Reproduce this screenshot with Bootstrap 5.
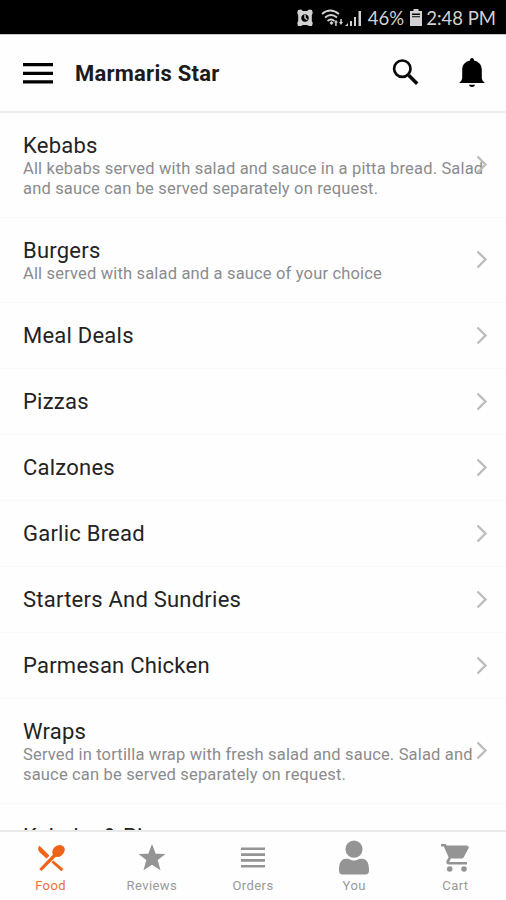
<!DOCTYPE html>
<html lang="en">
<head>
<meta charset="utf-8">
<meta name="viewport" content="width=device-width, initial-scale=1">
<title>Marmaris Star</title>
<link href="https://cdn.jsdelivr.net/npm/bootstrap@5.3.0/dist/css/bootstrap.min.css" rel="stylesheet">
<style>
body{font-family:Roboto,"Liberation Sans",sans-serif;background:#fefefe;color:#222}
.status-bar{height:34px;background:#000;color:#d2d2d2;font:400 18.5px Lato,sans-serif;padding:2px 10px 0 0}
.status-bar svg{fill:#d2d2d2}
.pct{margin-left:6px}
.batt{margin-left:6px}
.wifi{margin-left:7px}
.top-bar{height:79px;padding:0 20px 0 23px;border-top:1px solid #c9c9c9;border-bottom:2px solid #ebebeb;background:#fefefe}
.shop-name{font-size:22px;font-weight:700;line-height:26px;letter-spacing:.24px;margin-left:22px;padding-top:2px;color:#1b1b1b}
.bell{margin-left:39px}
.menu-row{padding:19px 17px 0 23px;height:66px;box-shadow:inset 0 -1px #fafafa}
.one-line{height:85px}
.two-line{height:105px}
.menu-title{font-size:22px;line-height:28px;letter-spacing:.23px;white-space:nowrap;color:#232323}
.menu-note{font-size:16.5px;line-height:19.5px;letter-spacing:.165px;margin-top:-1px;white-space:nowrap;color:#8b8b8e}
.chev{margin:-20px 0 0 -60px}
.tab-bar{height:70px;border-top:2px solid #e9e9e9;background:#fefefe;font-size:13px;line-height:19px;color:#999;letter-spacing:.42px}
.tab-bar svg{fill:#949494}
.tab-bar .on{color:#ee7136}
.tab-bar .on svg{fill:#ee6319}
</style>
</head>
<body>
<div class="d-flex flex-column vh-100 overflow-hidden">
  <div class="status-bar d-flex align-items-center justify-content-end flex-shrink-0">
    <svg width="18" height="18" viewBox="0 0 18 18"><path fill-rule="evenodd" d="M2 1l3-.5 2 1.500h4l2-1.500 3 .5.800 3-1 2v6l1 2-.8 3h-3l-2-1H7l-2 1H2l-.8-3 1-2V6l-1-2zM9 5.200a3.800 3.800 0 1 0 .01 0z"/><path d="M8.300 5.700h1.400v3l2 1.500-.8 1-2.600-1.900z"/></svg>
    <svg class="wifi" width="24" height="20" viewBox="0 0 24 20"><g fill="none" stroke="#d2d2d2" stroke-width="1.700"><path d="M1 6Q9-1 18 6M4 9.500q6-5 12 0M6.500 13q3.500-3 7 0"/></g><path d="M8.500 15l2-2 2 2-2 2zM13 14.500l2-2.500 2 2.500h-1.300v3.500h-1.500v-3.500zM18 14h1.300v-3h1.500v3H22l-2 3z"/></svg>
    <svg width="17" height="18" viewBox="0 0 17 18"><path d="M0 17l3-3v3zM5 12h2v5H5zM9 8h2v9H9zM13.500 2h2.500v15h-2.500z"/></svg>
    <span class="pct">46%</span>
    <svg class="batt" width="12" height="18" viewBox="0 0 12 18"><path fill-rule="evenodd" d="M3.500 0h5v2H12v15H0V2h3.500zM2 4.500V6h8V4.500zM2 7.200v1h8v-1z"/></svg>
    <span class="clock ms-1">2:48 PM</span>
  </div>
  <header class="top-bar d-flex align-items-center flex-shrink-0">
    <svg width="30" height="21" viewBox="0 0 30 21"><path d="M0 0h30v3.200H0zM0 8.800h30V12H0zM0 17.200h30v3.300H0z"/></svg>
    <h1 class="shop-name mb-0 me-auto">Marmaris Star</h1>
    <svg class="mb-1" width="27" height="27" viewBox="0 0 27 27" fill="none" stroke="#090909"><circle cx="10.300" cy="10.700" r="8.200" stroke-width="2.700"/><path d="M16.700 17.200l8.500 8.500" stroke-width="3.500"/></svg>
    <svg class="bell" width="28" height="30" viewBox="0 0 28 30"><path d="M14 0c1.300 0 2 1 2 2.500 5 1 7.800 4.500 7.800 9.500V20c0 2 1.200 3 3 5H1.200c1.800-2 3-3 3-5v-8c0-5 2.800-8.500 7.800-9.500C12 1 12.700 0 14 0zM11 26.800h6c-.5 3-5.500 3-6 0z"/></svg>
  </header>
  <main class="flex-grow-1 overflow-hidden" id="menu"></main>
  <nav class="tab-bar d-flex flex-shrink-0 text-center">
    <div class="on col d-flex flex-column align-items-center"><svg width="30" height="44" viewBox="0 0 30 44"><g transform="translate(1 12)"><ellipse cx="21.500" cy="7" rx="6.800" ry="5.400" transform="rotate(-40 21.500 7)"/><path d="M17 9.500l2.500 2.500L4.500 27 2.300 25zM2.300 1.500l8.500 8.500c2 1.600 1.500 2 .2 3.300l-1.600 1.200-6-5.500C.7 6.500.5 4 2.300 1.500zM16.300 16.500L26.500 25l-2.200 2.200-10-9z"/></g></svg>Food</div>
    <div class="col d-flex flex-column align-items-center"><svg width="28" height="44" viewBox="0 0 28 44"><path d="M14 12l3.700 9.700 9.800.3-7.800 6.100 2.800 10.100L14 32.700 5.500 38.200l2.800-10.100L.5 22l9.800-.3z"/></svg>Reviews</div>
    <div class="col d-flex flex-column align-items-center"><svg width="24" height="44" viewBox="0 0 24 44"><path d="M0 15.500h24v2.600H0zM0 21.300h24v2.600H0zM0 27.100h24v2.600H0zM0 33h24v2.600H0z"/></svg>Orders</div>
    <div class="col d-flex flex-column align-items-center"><svg width="30" height="44" viewBox="0 0 30 44"><ellipse cx="15" cy="17.200" rx="8.500" ry="8.600"/><path d="M0 38.500c0-7 1.500-11.800 7.500-11.800 4 0 4 1.800 7.500 1.800s3.500-1.800 7.500-1.800c6 0 7.500 4.800 7.500 11.800q0 4-3.500 4h-23Q0 42.500 0 38.500z"/></svg>You</div>
    <div class="col d-flex flex-column align-items-center"><svg width="30" height="44" viewBox="0 0 30 44"><path d="M1 12h4.700l1.500 2.400h20.600c1 0 1.300.7.900 1.500l-5 9.300c-.6 1-1.300 1.400-2.300 1.400H10.800l-1.500 2.800c0 .4.200.6.600.6H27v2.600H9c-2.500 0-3.300-2-2.400-3.800l2-3.600L3.800 14.400H1z"/><path d="M6 13.500h22L22.500 26H11z"/><circle cx="9.700" cy="37" r="2.800"/><circle cx="24" cy="37" r="2.800"/></svg>Cart</div>
  </nav>
</div>
<script>
const menu = [
  ["Kebabs", ["All kebabs served with salad and sauce in a pitta bread. Salad", "and sauce can be served separately on request."]],
  ["Burgers", ["All served with salad and a sauce of your choice"]],
  ["Meal Deals", []], ["Pizzas", []], ["Calzones", []], ["Garlic Bread", []],
  ["Starters And Sundries", []], ["Parmesan Chicken", []],
  ["Wraps", ["Served in tortilla wrap with fresh salad and sauce. Salad and", "sauce can be served separately on request."]],
  ["Kebabs &amp; Pizza", ["", ""]]
];
document.getElementById("menu").innerHTML = menu.map(([title, notes]) => `
  <section class="menu-row d-flex ${["", "one-line", "two-line"][notes.length]}">
    <div class="flex-grow-1"><div class="menu-title">${title}</div>${notes.length ? `<div class="menu-note">${notes.join("<br>")}</div>` : ""}</div>
    <svg class="chev align-self-center flex-shrink-0" width="16" height="20" viewBox="0 0 16 20" fill="none" stroke="#bdbdbd" stroke-width="2.400"><path d="M4.500 1.500l8 8-8 8"/></svg>
  </section>`).join("");
</script>
<script src="https://cdn.jsdelivr.net/npm/bootstrap@5.3.0/dist/js/bootstrap.bundle.min.js"></script>
</body>
</html>
